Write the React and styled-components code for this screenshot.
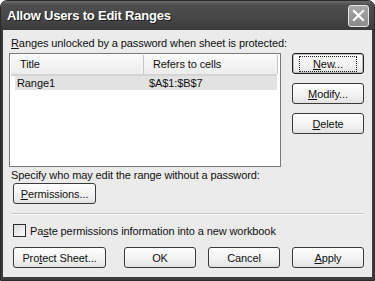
import React from 'react';
import styled, { createGlobalStyle } from 'styled-components';

const GlobalStyle = createGlobalStyle`
    html, body {
        margin: 0;
        padding: 0;
        background: #ffffff;
    }
    body {
        font-family: Tahoma, "Liberation Sans", Arial, sans-serif;
        font-size: 11px;
        letter-spacing: -0.1px;
        color: #111;
    }
`

const Window = styled.div`
    width: 375px;
    height: 281px;
    box-sizing: border-box;
    display: flex;
    flex-direction: column;
    background: linear-gradient(#5c5c5c, #3a3a3a 30px, #3c3c3c);
    border-radius: 7px 7px 0 0;
    border: 1px solid #2a2a2a;
    overflow: hidden;
`

const TitleBar = styled.div`
    height: 29px;
    flex: none;
    display: flex;
    align-items: center;
    justify-content: space-between;
    padding: 0 5px 0 6px;
    background: linear-gradient(#6a6a6a, #4e4e4e 4px, #444 20px, #3a3a3a);
`

const TitleText = styled.div`
    color: #fff;
    font-family: "Liberation Sans", Arial, sans-serif;
    font-weight: bold;
    font-size: 13px;
    text-shadow: 1px 1px 0 #1c1c1c;
    letter-spacing: -0.2px;
`

const CloseButton = styled.div`
    width: 19px;
    height: 20px;
    border: 1px solid #e6e6e6;
    border-radius: 3px;
    background: linear-gradient(#a8a8a8, #8a8a8a);
    display: flex;
    align-items: center;
    justify-content: center;
`

const Body = styled.div`
    flex: 1;
    margin: 0 2px 3px 2px;
    background: #ebebeb;
    padding: 6px 8px 0 6px;
    display: flex;
    flex-direction: column;
`

const Label = styled.div`
    height: 14px;
    line-height: 14px;
    margin-left: ${p => p.indent || 0}px;
    margin-top: ${p => p.top || 0}px;
    white-space: nowrap;
`

const Key = styled.span`
    text-decoration: underline;
    text-underline-offset: 1px;
`

const MainRow = styled.div`
    display: flex;
    margin-top: 3px;
`

const ListBox = styled.div`
    width: 272px;
    height: 114px;
    box-sizing: border-box;
    border: 1px solid #7a7a7a;
    background: #fff;
    padding: 1px 3px 0 1px;
`

const ListHeader = styled.div`
    display: grid;
    grid-template-columns: 133px 134px;
    height: 19px;
    background: linear-gradient(#fafafa, #ececec);
    border-bottom: 2px solid #d4d4d4;
`

const HeaderCell = styled.div`
    line-height: 19px;
    padding-left: ${p => p.pad}px;
    border-right: 1px solid #c6c6c6;
    box-shadow: inset -2px 0 0 #f4f4f4;
`

const ListRow = styled.div`
    display: grid;
    grid-template-columns: 129px 133px;
    height: 14px;
    line-height: 14px;
    margin-left: 4px;
    background: ${p => (p.selected ? '#e2e2e2' : 'transparent')};
`

const Cell = styled.div`
    padding-left: ${p => p.pad}px;
`

const SideButtons = styled.div`
    display: flex;
    flex-direction: column;
    gap: 9px;
    margin-left: 11px;
`

const Button = styled.div`
    width: ${p => p.w || 72}px;
    height: 21px;
    box-sizing: border-box;
    border: 1px solid ${p => (p.isDefault ? '#1e1e1e' : '#3a3a3a')};
    border-radius: 3px;
    background: linear-gradient(#fefefe, #f2f2f2 60%, #e2e2e2);
    box-shadow: ${p => (p.isDefault ? 'inset 0 0 0 1px #bdbdbd' : 'none')};
    display: flex;
    align-items: center;
    justify-content: center;
    white-space: nowrap;
    flex: none;
`

const FocusRing = styled.div`
    border: 1px dotted #222;
    padding: 1px 13px 0;
    line-height: 13px;
`

const ButtonRow = styled.div`
    display: flex;
    margin: ${p => p.top}px 0 0 4px;
`

const Separator = styled.div`
    height: 1px;
    margin: 9px 0 0 2px;
    background: #c8c8c8;
    border-bottom: 1px solid #fafafa;
`

const CheckRow = styled.div`
    display: flex;
    align-items: center;
    margin: 9px 0 0 4px;
    gap: 4px;
`

const CheckBox = styled.div`
    width: 13px;
    height: 13px;
    box-sizing: border-box;
    border: 1px solid #2c2c2c;
    background: linear-gradient(135deg, #dcdcdc, #fafafa);
`

const RightGroup = styled.div`
    display: flex;
    gap: 12px;
    margin-left: auto;
`

export default function App() {
    return (
        <>
            <GlobalStyle />
            <Window>
                <TitleBar>
                    <TitleText>Allow Users to Edit Ranges</TitleText>
                    <CloseButton>
                        <svg width="13" height="13" viewBox="0 0 13 13">
                            <path d="M2 2 L11 11 M11 2 L2 11" stroke="#fff" strokeWidth="2.2" strokeLinecap="square" />
                        </svg>
                    </CloseButton>
                </TitleBar>

                <Body>
                    <Label indent={2}><Key>R</Key>anges unlocked by a password when sheet is protected:</Label>

                    <MainRow>
                        <ListBox>
                            <ListHeader>
                                <HeaderCell pad={9}>Title</HeaderCell>
                                <HeaderCell pad={9}>Refers to cells</HeaderCell>
                            </ListHeader>
                            <ListRow selected>
                                <Cell pad={2}>Range1</Cell>
                                <Cell pad={5}>$A$1:$B$7</Cell>
                            </ListRow>
                        </ListBox>

                        <SideButtons>
                            <Button isDefault>
                                <FocusRing><Key>N</Key>ew...</FocusRing>
                            </Button>
                            <Button><Key>M</Key>odify...</Button>
                            <Button><Key>D</Key>elete</Button>
                        </SideButtons>
                    </MainRow>

                    <Label indent={2} top={1}>Specify who may edit the range without a password:</Label>

                    <ButtonRow top={1}>
                        <Button w={83}><Key>P</Key>ermissions...</Button>
                    </ButtonRow>

                    <Separator />

                    <CheckRow>
                        <CheckBox />
                        <span>Pa<Key>s</Key>te permissions information into a new workbook</span>
                    </CheckRow>

                    <ButtonRow top={10}>
                        <Button w={93}>Pro<Key>t</Key>ect Sheet...</Button>
                        <RightGroup>
                            <Button>OK</Button>
                            <Button>Cancel</Button>
                            <Button><Key>A</Key>pply</Button>
                        </RightGroup>
                    </ButtonRow>
                </Body>
            </Window>
        </>
    );
}
